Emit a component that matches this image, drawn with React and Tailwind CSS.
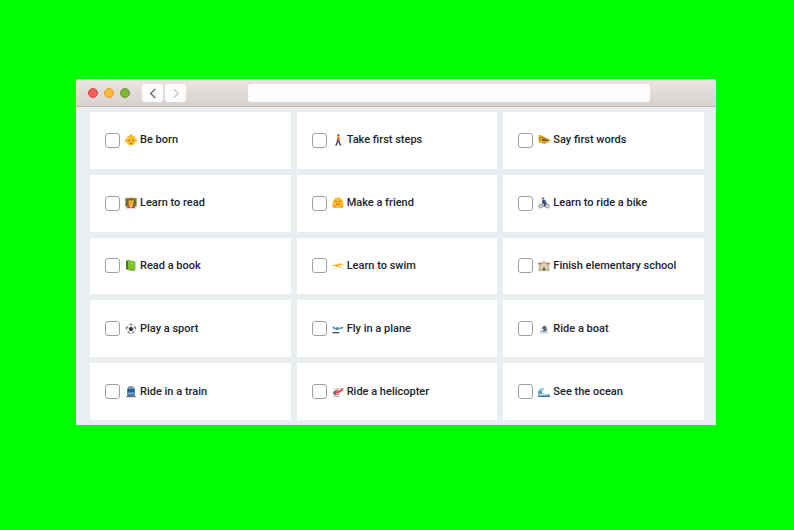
import React, { useState } from 'react';

// Small pictograms, all drawn on the same 36x36 grid
const Icon = ({ children }) => (
  <svg viewBox="0 0 36 36" className="size-3 shrink-0" fill="none" aria-hidden="true">
    {children}
  </svg>
);

const BabyIcon = () => (
  <Icon>
    <path d="M18 0c1 2 3 3 5 5 6 2 9 6 9 10 2 1 4 2 4 5s-2 5-5 5c-2 6-7 10-13 10S7 31 5 25c-3 0-5-2-5-5s2-4 4-5c0-4 3-8 9-10 2-1 4-3 5-5Z" fill="#f9bc2a" />
    <path d="M18 1c-1 4 3 4 1 8" stroke="#c98c1c" strokeWidth="2" />
    <circle cx="12" cy="19" r="2" fill="#5c4312" />
    <circle cx="24" cy="19" r="2" fill="#5c4312" />
    <path d="M14 27q4 3 8 0" stroke="#9c5a12" strokeWidth="2.5" />
  </Icon>
);

const WalkIcon = () => (
  <Icon>
    <circle cx="19" cy="5" r="4" fill="#d99a3b" />
    <path d="M16 3q4-5 7 1l-4 1Z" fill="#5a4033" />
    <path d="M16 10h6l2 9-3 2h-6Z" fill="#e8542f" />
    <path d="m16 12-2 8M22 12l3 7" stroke="#f1b23a" strokeWidth="2" />
    <path d="m17 20-4 13M20 20l4 12" stroke="#2d3f8c" strokeWidth="4" />
    <path d="M10 33h5M23 33h5" stroke="#493a42" strokeWidth="3" />
  </Icon>
);

const MegaphoneIcon = () => (
  <Icon>
    <path d="M2 4q4-4 7 0l26 13v7l-8 3H4q-4-2-2-8Z" fill="#e3b22c" />
    <path d="m8 5 27 13-2 3-21-5Z" fill="#b8860f" />
    <path d="m12 16 21 3-3 3H12Z" fill="#6f4f12" />
    <path d="M3 5c5 4 8 12 6 19-5-3-9-12-6-19Z" fill="#c0901b" />
    <path d="m5 25 29-2" stroke="#f6d552" strokeWidth="3" />
    <path d="m13 27 11 0" stroke="#a3720e" strokeWidth="3" />
  </Icon>
);

const TeacherIcon = () => (
  <Icon>
    <path d="M2 4h32v24H2Z" fill="#3d7a55" stroke="#a87b42" strokeWidth="2" />
    <path d="M8 28V10Q9 2 18 2t10 8v18Z" fill="#98651c" />
    <path d="M11 10q7 2 14-2v12q-1 8-7 8t-7-8Z" fill="#f8c23c" />
    <path d="M14 16h2M20 16h2" stroke="#664515" strokeWidth="3" />
    <path d="M15 22h6" stroke="#b06a22" strokeWidth="2" />
    <path d="M4 34q2-8 10-8l4 4 4-4q8 0 10 8Z" fill="#c8523a" />
    <path d="m14 26 4 8 4-8Z" fill="#f2d8a0" />
  </Icon>
);

const HugIcon = () => (
  <Icon>
    <circle cx="18" cy="17" r="16" fill="#fbbf2c" />
    <path d="M9 14q3-4 6 0M21 14q3-4 6 0" stroke="#70471a" strokeWidth="2" />
    <path d="M11 20q7 7 14 0Z" fill="#a35c16" />
    <path d="M1 22q4-2 6 2l6 4q1 6-5 6-7-1-7-12ZM35 22q-4-2-6 2l-6 4q-1 6 5 6 7-1 7-12Z" fill="#f8a828" />
  </Icon>
);

const BikeIcon = () => (
  <Icon>
    <circle cx="8" cy="27" r="6" stroke="#8d949c" strokeWidth="3" fill="#d5d9dc" />
    <circle cx="28" cy="27" r="6" stroke="#8d949c" strokeWidth="3" fill="#d5d9dc" />
    <path d="m8 27 8-8 8 4 4 4" stroke="#b7a25a" strokeWidth="2" />
    <circle cx="15" cy="6" r="4" fill="#e6ad42" />
    <path d="M11 5q1-5 7-3l2 3Z" fill="#4c4f55" />
    <path d="m13 8 10 2 4 10-5 2-10-7Z" fill="#2856b8" />
    <path d="m13 16 7 4-2 9" stroke="#26355c" strokeWidth="4" />
    <path d="m20 14 7 3" stroke="#e6ad42" strokeWidth="2" />
  </Icon>
);

const BookIcon = () => (
  <Icon>
    <path d="m3 3 6-3 22 5v26l-5 3L4 29Z" fill="#4c8f1d" />
    <path d="m9 1 21 5v25L9 26Z" fill="#82c22e" />
    <path d="M4 5v23l5-2V2Z" fill="#3b7318" />
    <path d="m6 29 20 4 4-2" stroke="#dce6c9" strokeWidth="2" />
    <path d="m14 9 10 2" stroke="#b7df6c" strokeWidth="2" />
  </Icon>
);

const SwimIcon = () => (
  <Icon>
    <path d="M1 24q5-4 9 0t9 0 8 0 8-1v4q-5 4-9 0t-8 0-8 0-9 0Z" fill="#d7effa" />
    <circle cx="14" cy="17" r="4" fill="#eeaa2f" />
    <path d="m1 16 10 1" stroke="#eeb22f" strokeWidth="3" />
    <path d="M14 19q1-9 8-10l12 5-1 3-9-2-2 4 7 3-2 2Z" fill="#f7b933" />
  </Icon>
);

const SchoolIcon = () => (
  <Icon>
    <path d="M2 12h32v20H2Z" fill="#dbc7a4" />
    <path d="M0 8h13v5H0ZM23 8h13v5H23Z" fill="#a76f52" />
    <path d="m9 12 9-8 9 8v20H9Z" fill="#e8d7b5" />
    <path d="m8 12 10-9 10 9" stroke="#b87954" strokeWidth="2" />
    <circle cx="18" cy="14" r="4" fill="#fff" stroke="#777" strokeWidth="1.5" />
    <path d="M14 23h8v9h-8Z" fill="#735745" />
    <path d="M4 17h3v4H4ZM29 17h3v4h-3ZM4 25h3v4H4ZM29 25h3v4h-3Z" fill="#6e8e9b" />
    <path d="M0 32h36" stroke="#8fa467" strokeWidth="2" />
  </Icon>
);

const BallIcon = () => (
  <Icon>
    <circle cx="18" cy="17" r="15" fill="#f4f4f4" stroke="#c6c6c6" strokeWidth="1.5" />
    <path d="m18 11 7 5-3 8h-8l-3-8Z" fill="#33363a" />
    <path d="m12 3 6 3 6-3q-6-2-12 0ZM3 13l2-3 4 3-5 7ZM33 13l-2-3-4 3 5 7ZM8 28l1-4 6 6-1 2ZM28 28l-1-4-6 6 1 2Z" fill="#6b6f74" />
    <path d="M18 6v5M9 13l3 3M27 13l-3 3M14 24l-4 3M22 24l4 3" stroke="#a0a3a6" strokeWidth="1.5" />
  </Icon>
);

const PlaneIcon = () => (
  <Icon>
    <path d="M2 12q15 4 25 0 7-2 8 2-3 5-16 6L5 18Z" fill="#a9cbe8" />
    <path d="m1 10 5 1 4 5-5 1ZM14 12l7 2-6 7h-4ZM28 11l6 2-5 3Z" fill="#3e78bd" />
    <path d="M5 18q15 2 28-4" stroke="#547391" strokeWidth="2" />
    <path d="M1 29h21" stroke="#4b5157" strokeWidth="4" />
  </Icon>
);

const BoatIcon = () => (
  <Icon>
    <path d="m9 17 8-10 8 1 3 10Z" fill="#c3cdd3" />
    <path d="m12 15 6-6 7 2-1 7-9 1Z" fill="#4b6271" />
    <path d="m5 19 10 3 14-5q0 9-4 13H12Z" fill="#b5c8d3" />
    <path d="m15 21 11-4-2 6-7 2Z" fill="#30404b" />
    <path d="M5 27q6-4 11 0t14-1v5H8Z" fill="#9dcce3" />
  </Icon>
);

const TrainIcon = () => (
  <Icon>
    <path d="M9 6q0-6 9-6t9 6v20H9Z" fill="#78909f" />
    <path d="M6 10q2-7 12-7t12 7v17H6Z" fill="#4a82bd" />
    <path d="M9 10h18v7H9Z" fill="#2c4f75" />
    <path d="M11 6h14" stroke="#c1d4df" strokeWidth="2" />
    <path d="M7 20h22v4H7Z" fill="#6aa6e0" />
    <path d="m8 27-6 7h32l-6-7Z" fill="#777d80" />
    <path d="M8 30h20" stroke="#4e5356" strokeWidth="2" />
  </Icon>
);

const HelicopterIcon = () => (
  <Icon>
    <path d="m4 11 20-4" stroke="#9aa5ab" strokeWidth="2" />
    <path d="M15 8v5" stroke="#656e74" strokeWidth="2" />
    <path d="M3 21q2-8 11-8h7l9-6 5-1-3 9-8 4-4 7-9 2q-7 0-8-7Z" fill="#e4574c" />
    <path d="M4 20q2-6 8-6l1 8-8 3Z" fill="#4c7a98" />
    <path d="m13 22 8-1-3 4h-6Z" fill="#f8cfca" />
    <path d="m9 27-1 4M18 27l1 4M4 31h19" stroke="#8c959b" strokeWidth="2" />
  </Icon>
);

const WaveIcon = () => (
  <Icon>
    <path d="M1 32V15Q4 6 15 6l4 5-6 2q-4 3-1 9 4 3 9 2l14-1v9Z" fill="#3f86b8" />
    <path d="M1 15Q4 6 15 6l4 5-6 2-4-1-2 5-3-3-3 4Z" fill="#a9d6e6" />
    <path d="M3 25q6-5 10 0l9 0 13 0v3l-14 1-18 0Z" fill="#d3ecf3" />
    <path d="M1 31h34" stroke="#2f719f" strokeWidth="4" />
  </Icon>
);

const GOALS = [
  { id: 'born', label: 'Be born', icon: BabyIcon },
  { id: 'steps', label: 'Take first steps', icon: WalkIcon },
  { id: 'words', label: 'Say first words', icon: MegaphoneIcon },
  { id: 'read', label: 'Learn to read', icon: TeacherIcon },
  { id: 'friend', label: 'Make a friend', icon: HugIcon },
  { id: 'bike', label: 'Learn to ride a bike', icon: BikeIcon },
  { id: 'book', label: 'Read a book', icon: BookIcon },
  { id: 'swim', label: 'Learn to swim', icon: SwimIcon },
  { id: 'school', label: 'Finish elementary school', icon: SchoolIcon },
  { id: 'sport', label: 'Play a sport', icon: BallIcon },
  { id: 'plane', label: 'Fly in a plane', icon: PlaneIcon },
  { id: 'boat', label: 'Ride a boat', icon: BoatIcon },
  { id: 'train', label: 'Ride in a train', icon: TrainIcon },
  { id: 'helicopter', label: 'Ride a helicopter', icon: HelicopterIcon },
  { id: 'ocean', label: 'See the ocean', icon: WaveIcon },
];

const BrowserBar = () => (
  <header className="flex h-7 shrink-0 items-center border-b border-[#bdb5b3] bg-linear-to-b from-[#ebe5e3] to-[#d8d1cf] pt-px pl-3">
    <div className="flex gap-[6px]">
      <span className="size-[10px] rounded-full border border-[#dc4646] bg-[#f45c5c]" />
      <span className="size-[10px] rounded-full border border-[#e39a25] bg-[#fdba35]" />
      <span className="size-[10px] rounded-full border border-[#69982b] bg-[#7fb53b]" />
    </div>
    <nav className="ml-3 flex gap-[2px]">
      <button type="button" aria-label="Back" className="flex h-[18px] w-[21px] items-center justify-center rounded-[3px] bg-[#fdfcfc] text-[#75706e]">
        <svg viewBox="0 0 8 12" className="h-[11px] w-2" fill="none" stroke="currentColor" strokeWidth="1.6">
          <path d="M6.5 1 1.5 6l5 5" />
        </svg>
      </button>
      <button type="button" aria-label="Forward" className="flex h-[18px] w-[21px] items-center justify-center rounded-[3px] bg-[#fdfcfc] text-[#cbc8c5]">
        <svg viewBox="0 0 8 12" className="h-[11px] w-2" fill="none" stroke="currentColor" strokeWidth="1.6">
          <path d="m1.5 1 5 5-5 5" />
        </svg>
      </button>
    </nav>
    <input type="text" aria-label="Address" className="mr-[66px] ml-[62px] h-[18px] min-w-0 flex-1 rounded-[3px] bg-[#fefdfd] px-2 text-[11px] outline-none" />
  </header>
);

const GoalCard = ({ goal, checked, onToggle }) => {
  const GoalIcon = goal.icon;
  return (
    <label htmlFor={goal.id} className="flex items-center bg-white px-[15px] py-4">
      <input
        id={goal.id}
        type="checkbox"
        checked={checked}
        onChange={() => onToggle(goal.id)}
        className="size-[15px] shrink-0 appearance-none rounded-[3px] border border-[#a0a0a0] bg-white checked:bg-[#4a82bd]"
      />
      <span className="ml-[5px] flex items-center gap-[3px]">
        <GoalIcon />
        <span className="text-[11px] leading-4 font-medium text-[#20262b]">{goal.label}</span>
      </span>
    </label>
  );
};

const App = () => {
  const [done, setDone] = useState([]);

  const toggle = (id) => {
    setDone((prev) => (prev.includes(id) ? prev.filter((item) => item !== id) : [...prev, id]));
  };

  return (
    <div className="flex min-h-screen flex-col bg-[#00ff00] pt-[79px] pr-[78px] pb-[105px] pl-[76px] font-[Roboto,sans-serif]">
      <div className="flex flex-1 flex-col overflow-hidden rounded-t-[4px] bg-[#e9eff0]">
        <BrowserBar />
        <main className="grid flex-1 auto-rows-fr grid-cols-3 gap-[6px] pt-[5px] pr-3 pb-[5px] pl-[14px]">
          {GOALS.map((goal) => (
            <GoalCard key={goal.id} goal={goal} checked={done.includes(goal.id)} onToggle={toggle} />
          ))}
        </main>
      </div>
    </div>
  );
};

export default App;
